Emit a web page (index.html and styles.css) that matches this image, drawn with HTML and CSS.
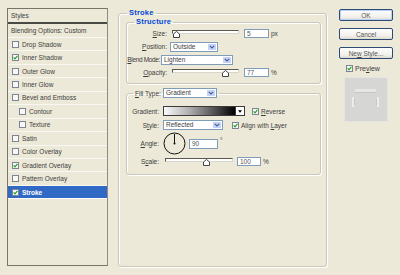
FILE: index.html
```html
<!DOCTYPE html>
<html>
<head>
<meta charset="utf-8">
<link rel="stylesheet" href="styles.css">
</head>
<body>
<div class="dlg">
  <div class="styles-panel">
    <div class="sp-head">Styles</div>
    <div class="sp-blend">Blending Options: Custom</div>
    <ul class="sp-list">
      <li class="sp-row"><span class="cb"></span><span>Drop Shadow</span></li>
      <li class="sp-row"><span class="cb"><svg viewBox="0 0 5 5"><path d="M0.6 2.4 L2 3.8 L4.4 0.9" fill="none" stroke="#21A121" stroke-width="1.2"/></svg></span><span>Inner Shadow</span></li>
      <li class="sp-row"><span class="cb"></span><span>Outer Glow</span></li>
      <li class="sp-row"><span class="cb"></span><span>Inner Glow</span></li>
      <li class="sp-row"><span class="cb"></span><span>Bevel and Emboss</span></li>
      <li class="sp-row sub"><span class="cb"></span><span>Contour</span></li>
      <li class="sp-row sub"><span class="cb"></span><span>Texture</span></li>
      <li class="sp-row"><span class="cb"></span><span>Satin</span></li>
      <li class="sp-row"><span class="cb"></span><span>Color Overlay</span></li>
      <li class="sp-row"><span class="cb"><svg viewBox="0 0 5 5"><path d="M0.6 2.4 L2 3.8 L4.4 0.9" fill="none" stroke="#21A121" stroke-width="1.2"/></svg></span><span>Gradient Overlay</span></li>
      <li class="sp-row"><span class="cb"></span><span>Pattern Overlay</span></li>
      <li class="sp-row sel"><span class="cb"><svg viewBox="0 0 5 5"><path d="M0.6 2.4 L2 3.8 L4.4 0.9" fill="none" stroke="#21A121" stroke-width="1.2"/></svg></span><span>Stroke</span></li>
    </ul>
  </div>

  <fieldset class="grp main">
    <legend class="ttl">Stroke</legend>
    <fieldset class="grp structure">
      <legend class="ttl">Structure</legend>
      <div class="row">
        <span class="lbl"><u>S</u>ize:</span>
        <span class="slider s-struct"><span class="track"></span><svg class="thumb" style="left:1px" viewBox="0 0 7 7"><path d="M0.5 6.5 V3 L3.5 0.5 L6.5 3 V6.5 Z" fill="#fff" stroke="#444"/></svg></span>
        <span class="inp i-size">5</span>
        <span class="unit">px</span>
      </div>
      <div class="row">
        <span class="lbl"><u>P</u>osition:</span>
        <span class="dd d-pos"><span class="dd-t">Outside</span><span class="dd-b"><svg viewBox="0 0 6 4"><path d="M0.8 0.8 L3 3 L5.2 0.8" fill="none" stroke="#4D6185" stroke-width="1.2"/></svg></span></span>
      </div>
      <div class="row">
        <span class="lbl l-blend"><u>B</u>lend Mode:</span>
        <span class="dd d-blend"><span class="dd-t">Lighten</span><span class="dd-b"><svg viewBox="0 0 6 4"><path d="M0.8 0.8 L3 3 L5.2 0.8" fill="none" stroke="#4D6185" stroke-width="1.2"/></svg></span></span>
      </div>
      <div class="row">
        <span class="lbl"><u>O</u>pacity:</span>
        <span class="slider s-struct"><span class="track"></span><svg class="thumb" style="left:50px" viewBox="0 0 7 7"><path d="M0.5 6.5 V3 L3.5 0.5 L6.5 3 V6.5 Z" fill="#fff" stroke="#444"/></svg></span>
        <span class="inp i-size">77</span>
        <span class="unit">%</span>
      </div>
    </fieldset>

    <fieldset class="grp fill">
      <legend class="fill-legend"><span class="fl-lbl"><u>F</u>ill Type:</span><span class="dd d-fill"><span class="dd-t">Gradient</span><span class="dd-b"><svg viewBox="0 0 6 4"><path d="M0.8 0.8 L3 3 L5.2 0.8" fill="none" stroke="#4D6185" stroke-width="1.2"/></svg></span></span></legend>
      <div class="frow r-grad">
        <span class="lbl f-lbl">Gradient:</span>
        <span class="swatch"><span class="sw-grad"></span><span class="sw-arrow"><svg viewBox="0 0 5 3"><path d="M0 0 H5 L2.5 3 Z" fill="#000"/></svg></span></span>
        <span class="cb cb-rev"><svg viewBox="0 0 5 5"><path d="M0.6 2.4 L2 3.8 L4.4 0.9" fill="none" stroke="#21A121" stroke-width="1.2"/></svg></span>
        <span class="cb-txt"><u>R</u>everse</span>
      </div>
      <div class="frow r-style">
        <span class="lbl f-lbl">S<u>t</u>yle:</span>
        <span class="dd d-style"><span class="dd-t">Reflected</span><span class="dd-b"><svg viewBox="0 0 6 4"><path d="M0.8 0.8 L3 3 L5.2 0.8" fill="none" stroke="#4D6185" stroke-width="1.2"/></svg></span></span>
        <span class="cb cb-align"><svg viewBox="0 0 5 5"><path d="M0.6 2.4 L2 3.8 L4.4 0.9" fill="none" stroke="#21A121" stroke-width="1.2"/></svg></span>
        <span class="cb-txt">Align with <u>L</u>ayer</span>
      </div>
      <div class="frow r-angle">
        <span class="lbl f-lbl"><u>A</u>ngle:</span>
        <svg class="dial" viewBox="0 0 23 23"><circle cx="11.5" cy="11.5" r="10.5" fill="none" stroke="#111" stroke-width="1"/><line x1="11.5" y1="11.5" x2="11.5" y2="2" stroke="#111" stroke-width="1"/><circle cx="11.5" cy="11.5" r="1" fill="#111"/></svg>
        <span class="inp i-angle">90</span>
        <span class="deg">°</span>
      </div>
      <div class="frow r-scale">
        <span class="lbl f-lbl">S<u>c</u>ale:</span>
        <span class="slider s-scale"><span class="track"></span><svg class="thumb" style="left:38px" viewBox="0 0 7 7"><path d="M0.5 6.5 V3 L3.5 0.5 L6.5 3 V6.5 Z" fill="#fff" stroke="#444"/></svg></span>
        <span class="inp i-scale">100</span>
        <span class="unit">%</span>
      </div>
    </fieldset>
  </fieldset>

  <div class="side">
    <div class="btn def"><span>OK</span></div>
    <div class="btn"><span>Cancel</span></div>
    <div class="btn"><span>Ne<u>w</u> Style...</span></div>
    <div class="prev-row"><span class="cb"><svg viewBox="0 0 5 5"><path d="M0.6 2.4 L2 3.8 L4.4 0.9" fill="none" stroke="#21A121" stroke-width="1.2"/></svg></span><span>Pre<u>v</u>iew</span></div>
    <div class="thumbbox">
      <svg viewBox="0 0 44 45" width="44" height="45"><rect x="0.5" y="0.5" width="43" height="44" fill="#D6D6D4" stroke="#E4E4E2"/><rect x="11" y="12" width="21" height="3" fill="#E6E6E4"/><rect x="11" y="15" width="21" height="1" fill="#C6C6C4"/><rect x="8" y="20" width="2" height="10" fill="#ECECEA"/><rect x="33" y="20" width="2" height="10" fill="#ECECEA"/><rect x="10" y="22" width="1" height="6" fill="#C6C6C4"/><rect x="32" y="22" width="1" height="6" fill="#C6C6C4"/></svg>
    </div>
  </div>
</div>
</body>
</html>
```

FILE: styles.css
```css
* { box-sizing: border-box; }
html, body { margin: 0; }
body {
  width: 400px;
  height: 275px;
  overflow: hidden;
  background: #ECE9D8;
  font-family: "Liberation Sans", Arial, sans-serif;
  font-size: 6.5px;
  color: #3c3c3c;
}
u { text-decoration: underline; text-underline-offset: 1px; }

.dlg {
  display: flex;
  align-items: flex-start;
  padding: 8px 0 0 7px;
  height: 275px;
}

/* left styles list */
.styles-panel {
  flex: none;
  width: 101px;
  height: 258px;
  border: 1px solid #77756a;
  border-right-color: #8f8d82;
  display: flex;
  flex-direction: column;
}
.sp-head {
  height: 15px;
  line-height: 13px;
  padding-left: 3px;
  border-bottom: 2px solid #4a4a44;
}
.sp-blend {
  height: 14px;
  line-height: 13px;
  padding-left: 3px;
  border-bottom: 1px solid #f8f7f1;
}
.sp-list { list-style: none; margin: 0; padding: 0; }
.sp-row {
  height: 13.45px;
  display: flex;
  align-items: center;
  gap: 3px;
  padding-left: 4px;
  border-bottom: 1px solid #f8f7f1;
  white-space: nowrap;
}
.sp-row.sub { padding-left: 11px; }
.sp-row.sel {
  background: #316AC5;
  color: #fff;
  font-weight: bold;
  border-bottom-color: #fff;
}

.cb {
  flex: none;
  width: 7px;
  height: 7px;
  border: 1px solid #7b8595;
  background: #f7f7f3;
  display: inline-flex;
  align-items: center;
  justify-content: center;
}
.cb svg { width: 5px; height: 5px; display: block; }

/* group boxes */
.grp {
  margin: 0;
  padding: 0;
  min-width: 0;
  border: 1px solid #C9C7BA;
  border-radius: 3px;
  box-shadow: 1px 1px 0 #fff, inset 1px 1px 0 #fff;
}
.ttl {
  color: #0046D5;
  font-weight: bold;
  font-size: 7.5px;
  letter-spacing: 0.2px;
  line-height: 10px;
  padding: 0 2px;
}
.main {
  flex: none;
  width: 209px;
  height: 259px;
  margin-left: 10px;
}
.main > .ttl { margin-left: 8px; }

.structure {
  width: 195px;
  height: 67px;
  margin: -1px 0 0 7px;
}
.structure > .ttl { margin-left: 7px; }

.row {
  display: flex;
  align-items: center;
  height: 13px;
  white-space: nowrap;
}
.lbl {
  flex: none;
  width: 40px;
  text-align: right;
  margin-right: 4px;
  white-space: nowrap;
}
.l-blend { width: 33px; margin-right: 1px; letter-spacing: -0.35px; }

.slider {
  flex: none;
  position: relative;
  height: 9px;
}
.s-struct { width: 67px; margin-left: 1px; }
.s-scale { width: 68px; margin-left: 2px; }
.slider .track {
  position: absolute;
  left: 0;
  right: 0;
  top: 1px;
  height: 4px;
  border: 1px solid #5a584e;
  border-right-color: #d8d6cc;
  border-bottom-color: #d8d6cc;
  background: #fff;
}
.slider .thumb {
  position: absolute;
  top: 2px;
  width: 7px;
  height: 7px;
}

.inp {
  flex: none;
  height: 9px;
  border: 1px solid #7F9DB9;
  background: #fff;
  padding-left: 2px;
  line-height: 7px;
  color: #555;
}
.i-size { width: 25px; margin-left: 5px; }
.i-angle { width: 29px; height: 10px; line-height: 8px; margin-left: 3px; }
.i-scale { width: 24px; margin-left: 4px; }
.unit { margin-left: 2px; }
.deg { margin-left: 2px; align-self: flex-start; margin-top: 5px; }

.dd {
  flex: none;
  display: flex;
  height: 10px;
  border: 1px solid #7F9DB9;
  background: #fff;
}
.dd-t { flex: 1; padding-left: 2px; line-height: 8px; white-space: nowrap; }
.dd-b {
  flex: none;
  width: 10px;
  background: #C3D3FD;
  border: 1px solid #fff;
  display: flex;
  align-items: center;
  justify-content: center;
}
.dd-b svg { width: 6px; height: 4px; display: block; }
.d-pos { width: 48px; margin-left: -1px; }
.d-blend { width: 72px; }
.d-fill { width: 54px; margin-left: 2px; }
.d-style { width: 60px; }

/* fill section */
.fill {
  width: 195px;
  height: 87px;
  margin: 4px 0 0 7px;
  padding-top: 6px;
}
.fill-legend {
  display: flex;
  align-items: center;
  padding: 0 2px;
  margin-left: 6px;
  height: 10px;
  white-space: nowrap;
}
.frow {
  display: flex;
  align-items: center;
  white-space: nowrap;
}
.r-grad, .r-style { height: 14px; }
.r-angle { height: 23px; }
.r-scale { height: 12px; }
.f-lbl { width: 32px; margin-right: 4px; }

.swatch {
  flex: none;
  display: flex;
  width: 82px;
  height: 10px;
  border: 1px solid #3a3a3a;
}
.sw-grad {
  flex: 1;
  background: linear-gradient(to right, #fafafa 0%, #b0b0b0 35%, #555 70%, #000 100%);
}
.sw-arrow {
  flex: none;
  width: 9px;
  background: #fff;
  border-left: 1px solid #3a3a3a;
  display: flex;
  align-items: center;
  justify-content: center;
}
.sw-arrow svg { width: 4px; height: 3px; display: block; }
.cb-rev { margin-left: 7px; }
.cb-align { margin-left: 9px; }
.cb-txt { margin-left: 2px; }
.dial { flex: none; width: 23px; height: 23px; }

/* right side */
.side {
  flex: none;
  width: 54px;
  margin-left: 12px;
  display: flex;
  flex-direction: column;
}
.btn {
  height: 12px;
  margin-bottom: 7px;
  border: 1px solid #2b4a74;
  border-radius: 2px;
  background: linear-gradient(#fefefe, #f1f0ea 70%, #dcd8cc);
  display: flex;
  align-items: center;
  justify-content: center;
  color: #555;
  white-space: nowrap;
}
.btn.def { margin-top: 1px; box-shadow: inset 0 0 0 1px #BCD0F4; }
.prev-row {
  display: flex;
  align-items: center;
  gap: 2px;
  height: 9px;
  margin: -2px 0 0 7px;
  font-size: 7px;
}
.thumbbox {
  margin: 4px 0 0 5px;
  width: 44px;
  height: 45px;
}
.thumbbox svg { display: block; }
```
